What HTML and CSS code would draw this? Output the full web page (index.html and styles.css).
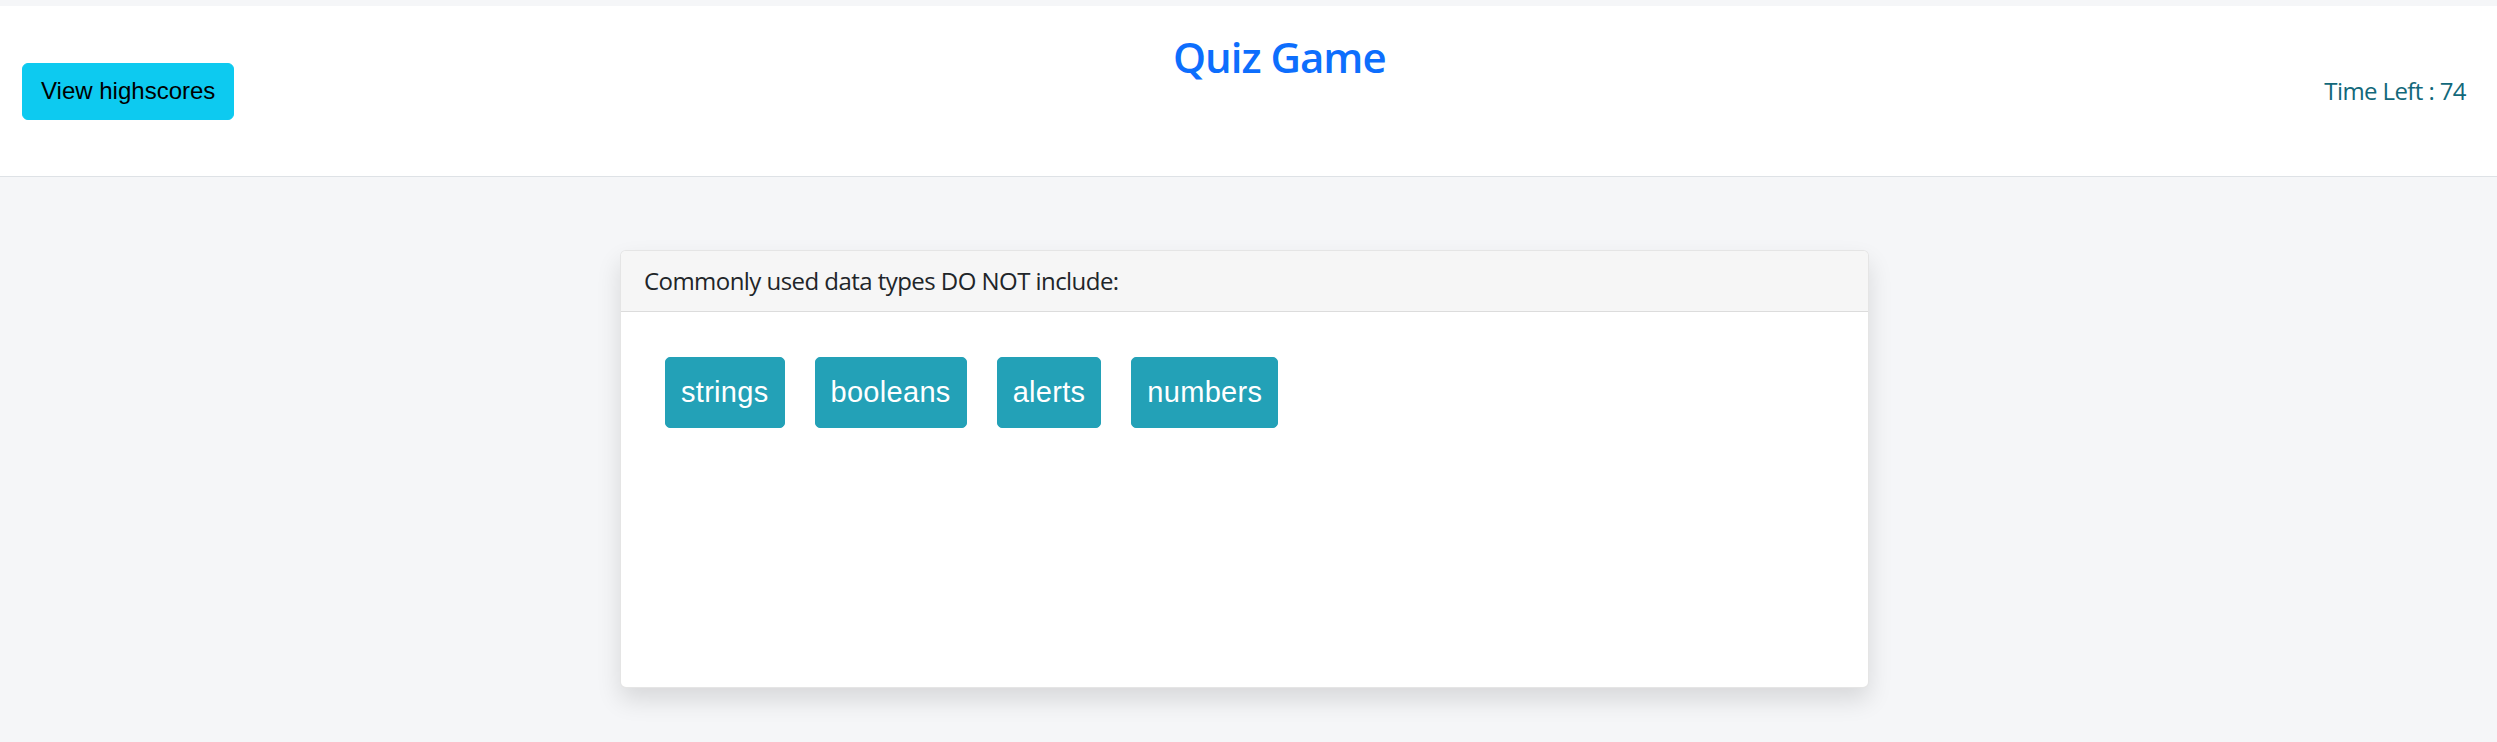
FILE: index.html
```html
<!DOCTYPE html>
<html lang="en">
<head>
<meta charset="utf-8">
<title>Quiz Game</title>
<link rel="stylesheet" href="styles.css">
</head>
<body>
  <header class="topbar">
    <button class="btn-highscores" type="button">View highscores</button>
    <h1 class="title">Quiz Game</h1>
    <div class="timer">Time Left : 74</div>
  </header>
  <main class="main">
    <section class="card">
      <div class="card-header">Commonly used data types DO NOT include:</div>
      <div class="card-body">
        <div class="answers">
          <button class="answer" type="button">strings</button>
          <button class="answer" type="button">booleans</button>
          <button class="answer" type="button">alerts</button>
          <button class="answer" type="button">numbers</button>
        </div>
      </div>
    </section>
  </main>
</body>
</html>
```

FILE: styles.css
```css
html, body {
  margin: 0;
  padding: 0;
}

body {
  background: #f5f6f8;
  font-family: "Open Sans", "Noto Sans", sans-serif;
  color: #212529;
  height: 742px;
  overflow: hidden;
}

.topbar {
  margin-top: 6px;
  height: 170px;
  background: #ffffff;
  border-bottom: 1px solid #dee2e6;
  display: flex;
  align-items: center;
  justify-content: space-between;
  padding: 0 31px 0 22px;
}

.btn-highscores {
  font-family: "Liberation Sans", Arial, sans-serif;
  font-size: 24px;
  line-height: 36px;
  padding: 9.5px 18px;
  border: 1px solid #0dcaf0;
  background: #0dcaf0;
  color: #000000;
  border-radius: 6px;
  cursor: pointer;
}

.title {
  align-self: flex-start;
  margin: 26px 0 0;
  font-size: 42px;
  line-height: 1.2;
  font-weight: 600;
  letter-spacing: -1px;
  color: #0d6efd;
}

.timer {
  font-size: 24px;
  line-height: 36px;
  letter-spacing: -0.6px;
  color: #12687a;
}

.main {
  padding-top: 73px;
}

.card {
  box-sizing: border-box;
  margin-left: 620px;
  width: 1249px;
  height: 438px;
  background: #ffffff;
  border: 1px solid rgba(0, 0, 0, 0.1);
  border-radius: 6px;
  box-shadow: 0 12px 24px rgba(0, 0, 0, 0.12);
  overflow: hidden;
}

.card-header {
  padding: 12px 23px;
  font-size: 24px;
  line-height: 36px;
  letter-spacing: -0.55px;
  background: #f6f6f6;
  border-bottom: 1px solid #dcdcdc;
  color: #212529;
}

.card-body {
  padding: 45px 44px;
}

.answers {
  display: flex;
  gap: 30px;
}

.answer {
  font-family: "Liberation Sans", Arial, sans-serif;
  font-size: 29px;
  line-height: 45px;
  letter-spacing: 0.3px;
  padding: 12px 15px;
  border: 1px solid #23a1b7;
  background: #23a1b7;
  color: #ffffff;
  border-radius: 5px;
  cursor: pointer;
}
```
